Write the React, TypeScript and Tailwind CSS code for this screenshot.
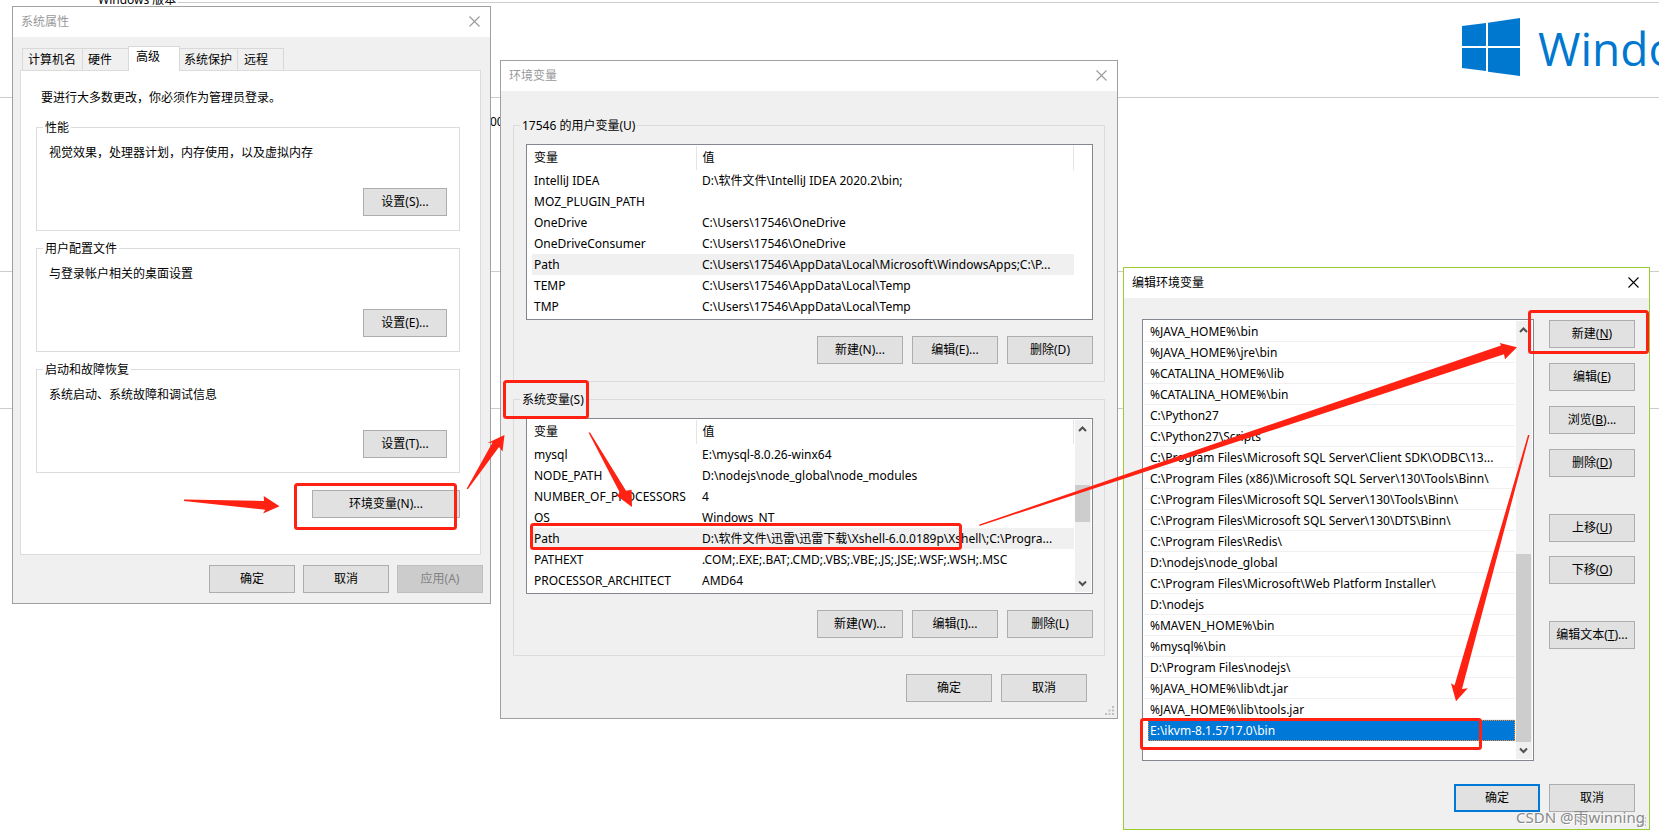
import type { ReactNode } from "react";

const userVars = [
  ["IntelliJ IDEA", "D:\\软件文件\\IntelliJ IDEA 2020.2\\bin;"],
  ["MOZ_PLUGIN_PATH", ""],
  ["OneDrive", "C:\\Users\\17546\\OneDrive"],
  ["OneDriveConsumer", "C:\\Users\\17546\\OneDrive"],
  ["Path", "C:\\Users\\17546\\AppData\\Local\\Microsoft\\WindowsApps;C:\\P..."],
  ["TEMP", "C:\\Users\\17546\\AppData\\Local\\Temp"],
  ["TMP", "C:\\Users\\17546\\AppData\\Local\\Temp"],
];

const systemVars = [
  ["mysql", "E:\\mysql-8.0.26-winx64"],
  ["NODE_PATH", "D:\\nodejs\\node_global\\node_modules"],
  ["NUMBER_OF_PROCESSORS", "4"],
  ["OS", "Windows_NT"],
  ["Path", "D:\\软件文件\\迅雷\\迅雷下载\\Xshell-6.0.0189p\\Xshell\\;C:\\Progra..."],
  ["PATHEXT", ".COM;.EXE;.BAT;.CMD;.VBS;.VBE;.JS;.JSE;.WSF;.WSH;.MSC"],
  ["PROCESSOR_ARCHITECT", "AMD64"],
];

const paths = [
  "%JAVA_HOME%\\bin",
  "%JAVA_HOME%\\jre\\bin",
  "%CATALINA_HOME%\\lib",
  "%CATALINA_HOME%\\bin",
  "C:\\Python27",
  "C:\\Python27\\Scripts",
  "C:\\Program Files\\Microsoft SQL Server\\Client SDK\\ODBC\\13...",
  "C:\\Program Files (x86)\\Microsoft SQL Server\\130\\Tools\\Binn\\",
  "C:\\Program Files\\Microsoft SQL Server\\130\\Tools\\Binn\\",
  "C:\\Program Files\\Microsoft SQL Server\\130\\DTS\\Binn\\",
  "C:\\Program Files\\Redis\\",
  "D:\\nodejs\\node_global",
  "C:\\Program Files\\Microsoft\\Web Platform Installer\\",
  "D:\\nodejs",
  "%MAVEN_HOME%\\bin",
  "%mysql%\\bin",
  "D:\\Program Files\\nodejs\\",
  "%JAVA_HOME%\\lib\\dt.jar",
  "%JAVA_HOME%\\lib\\tools.jar",
  "E:\\ikvm-8.1.5717.0\\bin",
];

const performance = [
  { title: "性能", text: "视觉效果，处理器计划，内存使用，以及虚拟内存", button: "设置(S)..." },
  { title: "用户配置文件", text: "与登录帐户相关的桌面设置", button: "设置(E)..." },
  { title: "启动和故障恢复", text: "系统启动、系统故障和调试信息", button: "设置(T)..." },
];

function Button({ children, className = "w-[86px] border border-[#adadad] bg-[#e1e1e1]", disabled = false }: { children: ReactNode; className?: string; disabled?: boolean }) {
  return (
    <button type="button" disabled={disabled} className={`h-7 shrink-0 whitespace-nowrap text-center ${className}`}>
      {children}
    </button>
  );
}

function TitleBar({ title, active = false }: { title: string; active?: boolean }) {
  return (
    <header className={`flex h-[30px] items-center justify-between bg-white pr-2.5 pl-2 ${active ? "text-black" : "text-[#999]"}`}>
      <h2>{title}</h2>
      <button type="button" aria-label="关闭" className="pb-0.5">
        <svg width="11" height="11" viewBox="0 0 11 11" fill="none" stroke="currentColor" strokeWidth="1.1">
          <path d="M.5.5l10 10M10.5.5l-10 10" />
        </svg>
      </button>
    </header>
  );
}

function Grip() {
  return (
    <svg className="absolute right-0.5 bottom-0.5" width="10" height="10" fill="#bfbfbf" aria-hidden="true">
      <path d="M7 0h2v2H7zM7 3.500h2v2H7zM7 7h2v2H7zM3.500 3.500h2v2h-2zM3.500 7h2v2h-2zM0 7h2v2H0z" />
    </svg>
  );
}

function ScrollBar({ thumb }: { thumb: string }) {
  return (
    <div className="my-px flex w-4 shrink-0 flex-col items-center bg-[#f0f0f0]">
      <svg width="16" height="17" viewBox="0 0 16 17" fill="none" stroke="#505050" strokeWidth="2">
        <path d="M4 11l3.500-3.500L11 11" />
      </svg>
      <div className="flex w-full flex-1 flex-col pr-px">
        <div className={`bg-[#cdcdcd] ${thumb}`} />
      </div>
      <svg width="16" height="17" viewBox="0 0 16 17" fill="none" stroke="#505050" strokeWidth="2">
        <path d="M4 6.500L7.500 10 11 6.500" />
      </svg>
    </div>
  );
}

function VariableTable({ rows, label, scroll = false }: { rows: string[][]; label: string; scroll?: boolean }) {
  return (
    <div className="flex h-44 border border-[#828790] bg-white pl-[5px]">
      <div className="w-[542px] pt-px">
        <table aria-label={label} className="w-full table-fixed border-collapse text-left whitespace-nowrap">
          <thead>
            <tr className="h-6">
              <th className="w-[164px] border-r border-[#e5e5e5] pl-0.5 font-normal">变量</th>
              <th className="border-r border-[#e5e5e5] pl-1.5 font-normal">值</th>
            </tr>
          </thead>
          <tbody>
            {rows.map(([name, value]) => (
              <tr key={name} className={name === "Path" ? "h-[21px] bg-[#f0f0f0]" : "h-[21px]"}>
                <td className="pl-0.5">{name}</td>
                <td className="pl-1.5">{value}</td>
              </tr>
            ))}
          </tbody>
        </table>
      </div>
      {scroll && (
        <div className="flex pl-px">
          <ScrollBar thumb="mt-12 h-[37px]" />
        </div>
      )}
    </div>
  );
}

function VariableGroup({ title, rows, buttons, scroll }: { title: string; rows: string[][]; buttons: string[]; scroll?: boolean }) {
  return (
    <fieldset className="border border-[#dcdcdc] pr-[11px] pb-[17px] pl-3">
      <legend className="-ml-1.5 px-0.5 pt-0.5">{title}</legend>
      <div className="pt-[9px]">
        <VariableTable rows={rows} label={title} scroll={scroll} />
        <div className="mt-4 flex justify-end gap-[9px]">
          {buttons.map((b) => (
            <Button key={b}>{b}</Button>
          ))}
        </div>
      </div>
    </fieldset>
  );
}

function SystemProperties() {
  return (
    <section className="absolute top-1.5 left-3 w-[479px] border border-[#a0a0a0] bg-[#f0f0f0]">
      <TitleBar title="系统属性" />
      <div className="pt-[9px] pr-[9px] pb-2.5 pl-[7px]">
        <div role="tablist" className="flex h-6 items-end pl-0.5">
          <button role="tab" className="h-[22px] w-[60px] border-t border-l border-[#d9d9d9] pl-[5px] text-left">计算机名</button>
          <button role="tab" className="h-[22px] w-[46px] border-t border-l border-[#d9d9d9] pl-[5px] text-left">硬件</button>
          <button role="tab" aria-selected="true" className="z-10 -mb-px h-[25px] w-[52px] border-x border-t border-[#d9d9d9] bg-white pb-1 pl-[7px] text-left">高级</button>
          <button role="tab" className="h-[22px] w-[58px] border-t border-r border-[#d9d9d9] pl-1 text-left">系统保护</button>
          <button role="tab" className="h-[22px] w-[46px] border-t border-r border-[#d9d9d9] pl-1.5 text-left">远程</button>
        </div>
        <div role="tabpanel" className="border border-[#dcdcdc] bg-white pt-[18px] pr-5 pb-9 pl-[15px]">
          <p className="pl-[5px]">要进行大多数更改，你必须作为管理员登录。</p>
          <div className="mt-2.5 flex flex-col gap-[7px]">
            {performance.map((g) => (
              <fieldset key={g.title} className="border border-[#dcdcdc] px-3 pb-3.5">
                <legend className="-ml-1.5 px-0.5 pt-0.5">{g.title}</legend>
                <p className="pt-[7px]">{g.text}</p>
                <div className="mt-[26px] flex justify-end">
                  <Button className="w-[84px] border border-[#adadad] bg-[#e1e1e1]">{g.button}</Button>
                </div>
              </fieldset>
            ))}
          </div>
          <div className="mt-[17px] flex justify-end">
            <Button className="w-[148px] border border-[#adadad] bg-[#e1e1e1]">环境变量(N)...</Button>
          </div>
        </div>
        <div className="-mr-0.5 mt-2.5 flex justify-end gap-2">
          <Button>确定</Button>
          <Button>取消</Button>
          <Button disabled className="w-[86px] border border-[#bfbfbf] bg-[#cccccc] text-[#838383]">应用(A)</Button>
        </div>
      </div>
    </section>
  );
}

function EnvironmentVariables() {
  return (
    <section className="absolute top-[60px] left-[500px] w-[618px] border border-[#a0a0a0] bg-[#f0f0f0]">
      <TitleBar title="环境变量" />
      <div className="px-3 pt-6 pb-4">
        <div className="flex flex-col gap-[7px]">
          <VariableGroup title="17546 的用户变量(U)" rows={userVars} buttons={["新建(N)...", "编辑(E)...", "删除(D)"]} />
          <VariableGroup title="系统变量(S)" rows={systemVars} buttons={["新建(W)...", "编辑(I)...", "删除(L)"]} scroll />
        </div>
        <div className="mt-[18px] flex justify-end gap-[9px] pr-[18px]">
          <Button>确定</Button>
          <Button>取消</Button>
        </div>
      </div>
      <Grip />
    </section>
  );
}

function EditVariable() {
  return (
    <section className="absolute top-[267px] left-[1123px] w-[527px] border border-[#9acd32] bg-[#f0f0f0]">
      <TitleBar title="编辑环境变量" active />
      <div className="pt-[21px] pr-3.5 pb-[17px] pl-[18px]">
        <div className="flex gap-[15px]">
          <div className="flex h-[442px] flex-1 gap-px border border-[#828790] bg-white px-px">
            <ul role="listbox" aria-label="编辑环境变量" className="flex-1 pt-px">
              {paths.map((p, i) =>
                i === paths.length - 1 ? (
                  <li key={p} role="option" aria-selected="true" className="ml-1 h-[21px] border border-dotted border-[#ff8728] bg-[#0078d7] pt-px pl-px whitespace-nowrap text-white">
                    {p}
                  </li>
                ) : (
                  <li key={p} role="option" aria-selected="false" className="h-[21px] border-b border-[#f0f0f0] pt-0.5 pl-1.5 whitespace-nowrap">
                    {p}
                  </li>
                )
              )}
            </ul>
            <ScrollBar thumb="mt-[216px] h-[188px]" />
          </div>
          <div className="flex flex-col gap-[37px] pt-px">
            <div className="flex flex-col gap-[15px]">
              <Button>新建(<u>N</u>)</Button>
              <Button>编辑(<u>E</u>)</Button>
              <Button>浏览(<u>B</u>)...</Button>
              <Button>删除(<u>D</u>)</Button>
            </div>
            <div className="flex flex-col gap-3.5">
              <Button>上移(<u>U</u>)</Button>
              <Button>下移(<u>O</u>)</Button>
            </div>
            <Button>编辑文本(<u>T</u>)...</Button>
          </div>
        </div>
        <div className="mt-[23px] flex justify-end gap-[9px]">
          <Button className="w-[86px] border-2 border-[#0078d7] bg-[#e1e1e1]">确定</Button>
          <Button>取消</Button>
        </div>
      </div>
      <Grip />
    </section>
  );
}

// "About Windows" page behind the dialogs
function Backdrop() {
  return (
    <div>
      <div className="-mt-2 flex h-5 items-center gap-0.5 pl-[98px]">
        <span className="pb-1">Windows 版本</span>
        <hr className="flex-1 border-[#cccccc]" />
      </div>
      <div className="flex h-[86px] justify-end border-b border-[#cccccc]">
        <div className="flex w-[197px] items-start gap-[18px] pt-1.5 whitespace-nowrap text-[#0078d0]">
          <svg width="58" height="58" viewBox="0 0 58 58" fill="currentColor" className="shrink-0">
            <path d="M0 8L24 5v23H0zM26 4.700L58 0v28H26zM0 30h24v23L0 50zM26 30h32v28l-32-4.300z" />
          </svg>
          <span className="font-['Open_Sans'] text-[46px] leading-[60px]">Windows 10</span>
        </div>
      </div>
      <div className="h-[174px] border-b border-[#cccccc] pt-[15px] pl-[490px]">00</div>
      <div className="h-[137px] border-b border-[#cccccc]" />
    </div>
  );
}

function Annotations() {
  return (
    <svg className="pointer-events-none absolute top-0 left-0" width="1659" height="835" fill="#ff2112" aria-hidden="true">
      <g fill="none" stroke="#ff2112" strokeWidth="3">
        <rect x="295.500" y="484.500" width="160" height="44" rx="2" />
        <rect x="504.500" y="381.500" width="83" height="36" rx="2" />
        <rect x="531.500" y="524.500" width="429" height="24" rx="2" />
        <rect x="1529.500" y="311.500" width="118" height="41" rx="2" />
        <rect x="1141.500" y="719.500" width="339" height="29" rx="2" />
      </g>
      <path d="M184 499.500L264 501l-.300-5 15.800 10.300-16.500 7.200 2.300-3.800L184 501z" />
      <path d="M466.500 489l26-46.500-5 .500 17-8-2 16.600-3.500-4.600-31 42z" />
      <path d="M588.500 432.500h1.500L626 490.700l5.600-1 .4 17.300-15.500-11.500 3.500-2.500z" />
      <path d="M979.400 524.500L1501 345.500l-1.300-2.500 17.300 4.300-12 12-1-5L979.400 526z" />
      <path d="M1528 435h1.500L1462 689l5.800-.700L1456 701.300l-5-18 3.500 2.200z" />
    </svg>
  );
}

export default function App() {
  return (
    <main lang="zh-CN" className="relative min-h-screen overflow-hidden bg-white font-['Noto_Sans','Noto_Sans_CJK_SC',sans-serif] text-[12px] leading-[18px] text-black">
      <Backdrop />
      <SystemProperties />
      <EnvironmentVariables />
      <EditVariable />
      <Annotations />
      <p className="absolute right-3.5 bottom-2 text-[15px] leading-5 text-[#8a8a8a] [text-shadow:1px_1px_0_#fff]">CSDN @雨winning</p>
    </main>
  );
}
